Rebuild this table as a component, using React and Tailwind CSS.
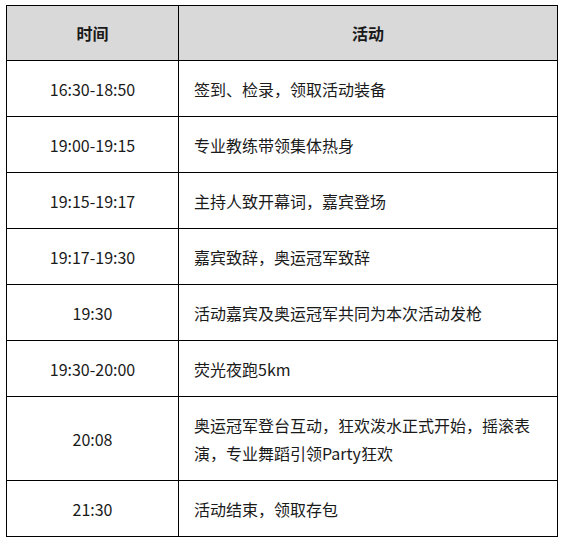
import React from "react";

const rows = [
  { time: "16:30-18:50", text: "签到、检录，领取活动装备" },
  { time: "19:00-19:15", text: "专业教练带领集体热身" },
  { time: "19:15-19:17", text: "主持人致开幕词，嘉宾登场" },
  { time: "19:17-19:30", text: "嘉宾致辞，奥运冠军致辞" },
  { time: "19:30", text: "活动嘉宾及奥运冠军共同为本次活动发枪" },
  { time: "19:30-20:00", text: "荧光夜跑5km" },
  {
    time: "20:08",
    text: "奥运冠军登台互动，狂欢泼水正式开始，摇滚表演，专业舞蹈引领Party狂欢",
    tall: true,
  },
  { time: "21:30", text: "活动结束，领取存包" },
];

const App = () => {
  return (
    <div
      className="w-[561px] h-[544px] bg-white pt-[5px] pl-[6px]"
      style={{ fontFamily: '"Noto Sans CJK SC", "Noto Sans", sans-serif' }}
    >
      <table className="w-[552px] border-collapse text-[16px] text-[#1a1a1a]">
        <thead>
          <tr className="h-[55px] bg-[#d9d9d9]">
            <th className="w-[172px] border border-black font-bold text-center">
              时间
            </th>
            <th className="border border-black font-bold text-center">活动</th>
          </tr>
        </thead>
        <tbody>
          {rows.map((r) => (
            <tr key={r.time + r.text} className={r.tall ? "h-[84px]" : "h-[56px]"}>
              <td className="border border-black text-center">{r.time}</td>
              <td className="border border-black pl-[15px] pr-[15px] leading-[28px] text-left">
                {r.text}
              </td>
            </tr>
          ))}
        </tbody>
      </table>
    </div>
  );
};

export default App;
